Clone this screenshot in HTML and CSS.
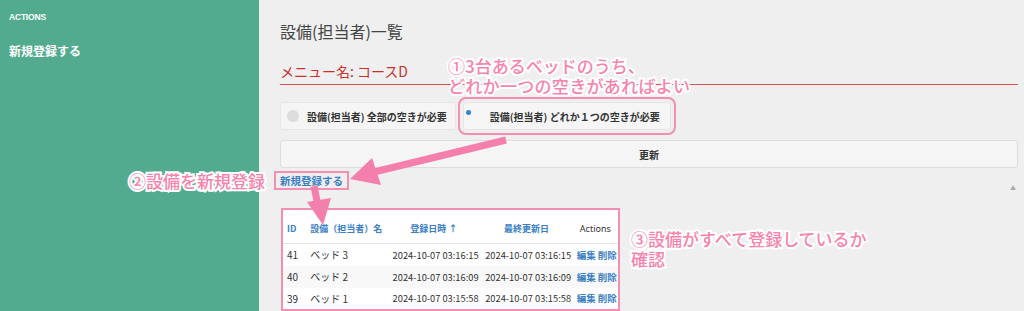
FILE: index.html
```html
<!DOCTYPE html>
<html lang="ja">
<head>
<meta charset="utf-8">
<link rel="stylesheet" href="styles.css">
</head>
<body>
<div class="page">
  <aside class="sidebar">
    <div class="side-head">ACTIONS</div>
    <div class="side-link">新規登録する</div>
  </aside>
  <main class="main">
    <h1 class="title">設備(担当者)一覧</h1>
    <h2 class="menu">メニュー名: コースD</h2>
    <div class="radios">
      <div class="radio"><span class="circle"></span>設備(担当者) 全部の空きが必要</div>
      <div class="radio selected"><span class="dot"></span>設備(担当者) どれか１つの空きが必要</div>
    </div>
    <div class="update">更新</div>
    <div class="linkrow">
      <a class="newlink">新規登録する</a>
      <span class="caret">▲</span>
    </div>
    <table class="tbl">
      <colgroup><col class="w-id"><col class="w-name"><col class="w-date"><col class="w-date"><col class="w-act"></colgroup>
      <thead>
        <tr><th>ID</th><th>設備（担当者）名</th><th class="ctr">登録日時 ↑</th><th class="ctr">最終更新日</th><th class="ctr act-h">Actions</th></tr>
      </thead>
      <tbody>
        <tr><td>41</td><td>ベッド 3</td><td class="d">2024-10-07 03:16:15</td><td class="d">2024-10-07 03:16:15</td><td class="act">編集 削除</td></tr>
        <tr class="alt"><td>40</td><td>ベッド 2</td><td class="d">2024-10-07 03:16:09</td><td class="d">2024-10-07 03:16:09</td><td class="act">編集 削除</td></tr>
        <tr><td>39</td><td>ベッド 1</td><td class="d">2024-10-07 03:15:58</td><td class="d">2024-10-07 03:15:58</td><td class="act">編集 削除</td></tr>
      </tbody>
    </table>
  </main>
</div>
<svg class="arrows" width="1024" height="311" viewBox="0 0 1024 311">
  <path d="M506 140 L374 172" stroke="#f47fad" stroke-width="7" fill="none"/>
  <polygon points="350,179 372,158 381,185" fill="#f47fad"/>
  <path d="M314 186 L318 206" stroke="#f47fad" stroke-width="7" fill="none"/>
  <polygon points="323,225 307,202 331,198" fill="#f47fad"/>
</svg>
<div class="note n1"><span class="l1">①3台あるベッドのうち、</span><span class="wide">どれか一つの空きがあればよい</span></div>
<div class="note n2">②設備を新規登録</div>
<div class="note n3">③設備がすべて登録しているか<br>確認</div>
</body>
</html>
```
FILE: styles.css
```css
* { box-sizing: border-box; }
html, body { margin: 0; padding: 0; }
body {
  width: 1024px;
  height: 311px;
  overflow: hidden;
  background: #efefef;
  font-family: "Noto Sans CJK JP", "Noto Sans", sans-serif;
  color: #333;
  position: relative;
}
.page { display: flex; height: 311px; }
.sidebar {
  width: 259px;
  flex: none;
  background: #52ab8e;
  color: #fff;
  padding: 11px 9px;
}
.side-head { font-family: "Liberation Sans", sans-serif; font-weight: bold; font-size: 8.5px; letter-spacing: -0.2px; line-height: 12px; }
.side-link { font-weight: bold; font-size: 12px; margin-top: 20px; line-height: 16px; }
.main { flex: 1; padding: 20px 6px 0 21px; }
.title { margin: 0; font-weight: normal; font-size: 16px; line-height: 22px; color: #444; }
.menu {
  margin: 18px 0 0;
  font-weight: normal;
  font-size: 14px;
  line-height: 22px;
  color: #c9302c;
  border-bottom: 1.5px solid #d9534f;
  padding-bottom: 2px;
}
.radios { display: flex; gap: 5px; margin-top: 17px; }
.radio {
  display: flex; align-items: center;
  height: 28px;
  background: #f5f5f5;
  border: 1px solid #e6e6e6;
  border-radius: 3px;
  font-size: 10px;
  font-weight: bold;
  color: #333;
  padding: 0 8px 0 6px;
  white-space: nowrap;
}
.radio .circle { width: 12px; height: 12px; border-radius: 50%; background: #dcdcdc; margin-right: 8px; }
.radio.selected { outline: 2px solid #f48fb1; outline-offset: 3px; padding-left: 2px; padding-right: 10px; margin-left: 2px; }
.radio .dot { width: 5px; height: 5px; border-radius: 50%; background: #2f86d6; margin-right: 19px; margin-top: -8px; }
.update {
  margin-top: 10px;
  height: 28px;
  background: #f5f5f5;
  border: 1px solid #dedede;
  border-radius: 3px;
  display: flex; align-items: center; justify-content: center;
  font-size: 10px; font-weight: bold; color: #333;
}
.linkrow { display: flex; justify-content: space-between; align-items: flex-start; margin-top: 5px; }
.newlink {
  font-size: 10.5px; font-weight: bold; color: #3a7fc4;
  outline: 2px solid #f48fb1; outline-offset: 0;
  line-height: 15px; padding: 0 4px; margin-left: -4px;
}
.caret { font-size: 6px; color: #aaa; margin-top: 10px; margin-right: 2px; }
.tbl {
  margin: 16px 0 0 1px;
  border-collapse: collapse;
  table-layout: fixed;
  background: #fff;
  border: 2px solid #f48fb1;
  width: 339px;
}
.w-id { width: 24px; }
.w-name { width: 81px; }
.w-date { width: 92px; }
.w-act { width: 46px; }
.tbl th {
  color: #3a7fc4; font-weight: bold; text-align: left;
  padding: 12px 4px 7px 4px;
  border-bottom: 1px solid #e4e4e4;
  font-size: 9px; line-height: 14px; white-space: nowrap;
}
.tbl th.ctr { text-align: center; }
.tbl th.act-h { color: #333; font-weight: normal; font-family: "Noto Sans", sans-serif; }
.tbl td { padding: 0 4px; height: 22px; color: #333; white-space: nowrap; font-size: 10px; }
.tbl td.d { font-size: 9.3px; padding-left: 5px; }
.tbl tr.alt td { background: #f8f8f8; }
.tbl td.act { color: #3a7fc4; font-weight: bold; text-align: center; font-size: 9.5px; }
.arrows { position: absolute; left: 0; top: 0; pointer-events: none; }
.note {
  position: absolute;
  color: #f783ac;
  font-size: 17px;
  font-weight: 500;
  line-height: 20px;
  -webkit-text-stroke: 4px #fff;
  paint-order: stroke fill;
  white-space: nowrap;
}
.n1 { left: 448px; top: 56px; display: flex; flex-direction: column; align-items: flex-start; }
.n1 .wide { display: block; width: 242px; white-space: normal; text-align: justify; text-align-last: justify; }
.n2 { left: 129px; top: 171px; }
.n3 { left: 631px; top: 229px; }
```
